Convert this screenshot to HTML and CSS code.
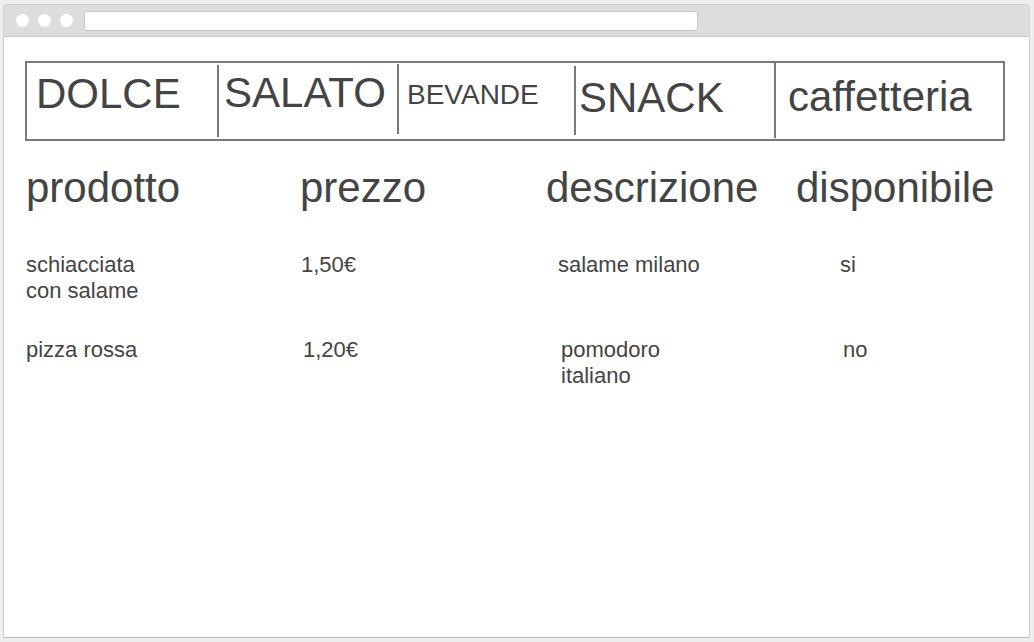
FILE: index.html
```html
<!DOCTYPE html>
<html lang="it">
<head>
<meta charset="utf-8">
<title>Menu bar</title>
<link rel="stylesheet" href="styles.css">
</head>
<body>
<div class="window">
  <div class="titlebar">
    <span class="dot"></span>
    <span class="dot"></span>
    <span class="dot"></span>
    <div class="urlbar"></div>
  </div>
  <div class="content">
    <nav class="categories">
      <div class="cat cat-dolce">DOLCE</div>
      <div class="cat cat-salato">SALATO</div>
      <div class="cat cat-bevande">BEVANDE</div>
      <div class="cat cat-snack">SNACK</div>
      <div class="cat cat-caffe">caffetteria</div>
    </nav>
    <div class="row row-head">
      <div>prodotto</div>
      <div>prezzo</div>
      <div>descrizione</div>
      <div>disponibile</div>
    </div>
    <div class="row row-a">
      <div class="narrow">schiacciata con salame</div>
      <div>1,50€</div>
      <div class="narrow">salame milano</div>
      <div>si</div>
    </div>
    <div class="row row-b">
      <div class="narrow">pizza rossa</div>
      <div>1,20€</div>
      <div class="narrow">pomodoro italiano</div>
      <div>no</div>
    </div>
  </div>
</div>
</body>
</html>
```
FILE: styles.css
```css
html, body {
  margin: 0;
  padding: 0;
  background: #eeeeee;
}

body {
  font-family: "Liberation Sans", Arial, sans-serif;
  color: #444444;
  padding: 4px 4px 0 3px;
}

.window {
  width: 1025px;
  height: 632px;
  background: #ffffff;
  border: 1px solid #cfcfcf;
  border-bottom-color: #bdbdbd;
  border-radius: 4px 4px 0 0;
  overflow: hidden;
}

.titlebar {
  height: 31px;
  background: #dddddd;
  border-bottom: 1px solid #c9c9c9;
  display: flex;
  align-items: center;
  padding-left: 12px;
  gap: 9px;
}

.dot {
  width: 13px;
  height: 13px;
  border-radius: 50%;
  background: #ffffff;
  flex: none;
}

.urlbar {
  margin-left: 2px;
  width: 612px;
  height: 18px;
  background: #ffffff;
  border: 1px solid #c8c8c8;
  border-radius: 3px;
}

.content {
  padding: 24px 0 0 21px;
}

.categories {
  width: 976px;
  height: 76px;
  border: 2px solid #7a7a7a;
  display: flex;
}

.cat {
  line-height: 48px;
  font-size: 42px;
  white-space: nowrap;
}

.cat + .cat {
  border-left: 2px solid #7a7a7a;
}

.cat-dolce {
  width: 181px;
  padding: 7px 0 0 9px;
}

.cat-salato {
  width: 173px;
  padding: 4px 0 0 5px;
  margin: 2px 0 2px;
}

.cat-bevande {
  width: 167px;
  padding: 14px 0 0 8px;
  font-size: 28px;
  line-height: 34px;
  margin: 1px 0 5px;
}

.cat-snack {
  width: 195px;
  padding: 8px 0 0 3px;
  margin: 3px 0 4px;
}

.cat-caffe {
  flex: 1;
  padding: 10px 0 0 12px;
  margin: 0 0 1px;
}

.row {
  display: grid;
  font-size: 22px;
  line-height: 26px;
  margin-left: 1px;
}

.row-head {
  grid-template-columns: 274px 246px 250px 1fr;
  font-size: 42px;
  line-height: 48px;
  margin-top: 23px;
}

.row-a {
  grid-template-columns: 275px 257px 282px 1fr;
  margin-top: 40px;
}

.row-b {
  grid-template-columns: 277px 258px 282px 1fr;
  margin-top: 33px;
}

.narrow {
  max-width: 150px;
}
```
